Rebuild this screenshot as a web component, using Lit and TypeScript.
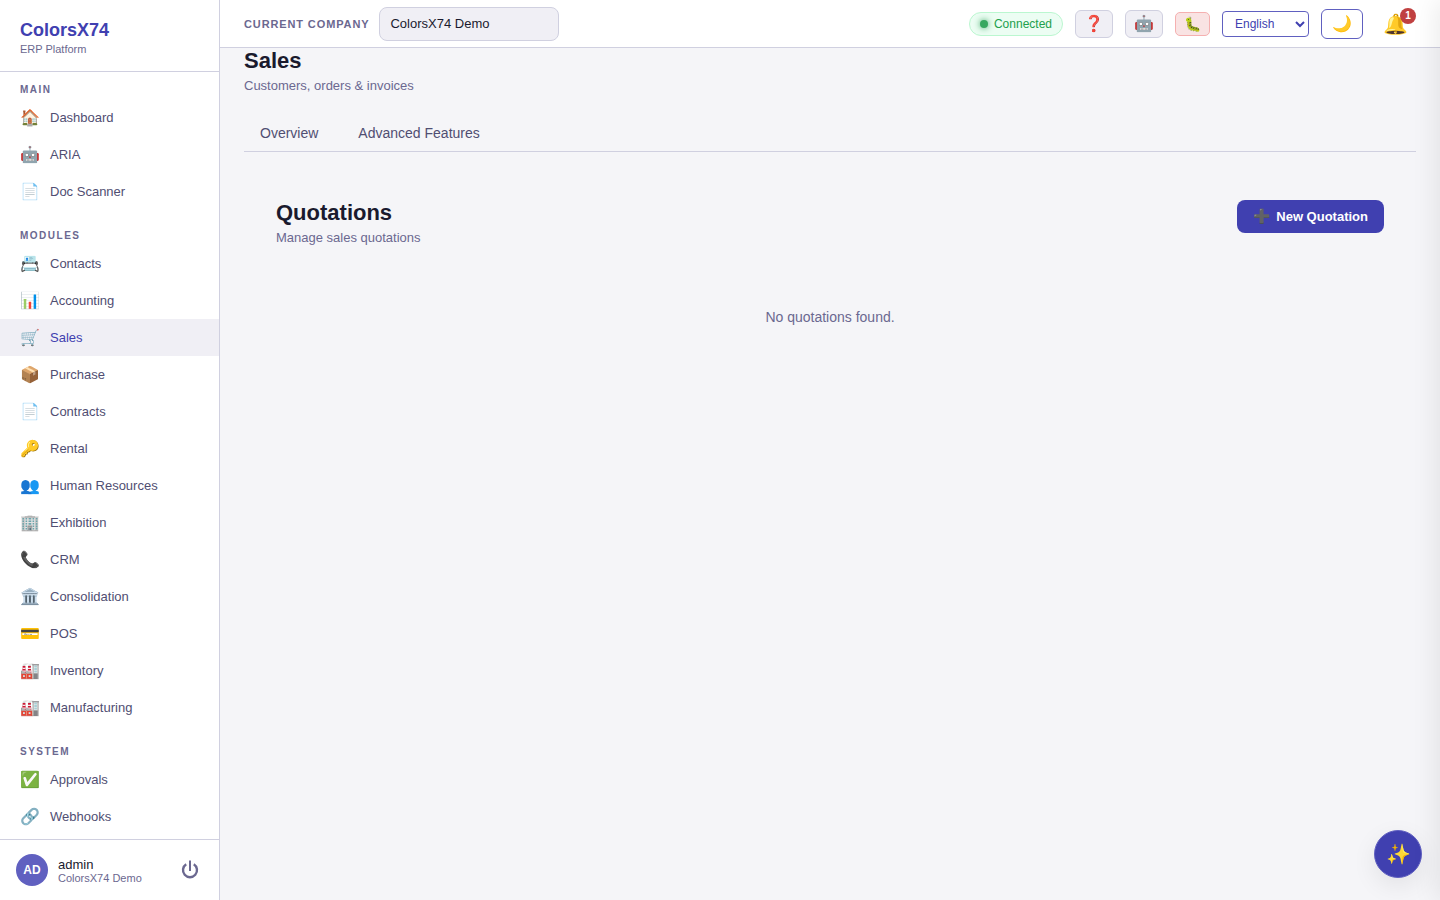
import { LitElement, html, css } from "lit";
import { customElement, state } from "lit/decorators.js";
import { classMap } from "lit/directives/class-map.js";

interface NavItem {
  icon: string;
  label: string;
}

interface NavSection {
  title: string;
  items: NavItem[];
}

const sections: NavSection[] = [
  {
    title: "Main",
    items: [
      { icon: "🏠", label: "Dashboard" },
      { icon: "🤖", label: "ARIA" },
      { icon: "📄", label: "Doc Scanner" },
    ],
  },
  {
    title: "Modules",
    items: [
      { icon: "📇", label: "Contacts" },
      { icon: "📊", label: "Accounting" },
      { icon: "🛒", label: "Sales" },
      { icon: "📦", label: "Purchase" },
      { icon: "📄", label: "Contracts" },
      { icon: "🔑", label: "Rental" },
      { icon: "👥", label: "Human Resources" },
      { icon: "🏢", label: "Exhibition" },
      { icon: "📞", label: "CRM" },
      { icon: "🏛️", label: "Consolidation" },
      { icon: "💳", label: "POS" },
      { icon: "🏭", label: "Inventory" },
      { icon: "🏭", label: "Manufacturing" },
    ],
  },
  {
    title: "System",
    items: [
      { icon: "✅", label: "Approvals" },
      { icon: "🔗", label: "Webhooks" },
    ],
  },
];

@customElement("app-sidebar")
export class AppSidebar extends LitElement {
  @state() private active = "Sales";

  static styles = css`
    :host {
      display: flex;
      flex-direction: column;
      box-sizing: border-box;
      width: 220px;
      flex: none;
      min-height: 0;
      background: #fff;
      border-right: 1px solid #d0d0e0;
    }
    .brand {
      padding: 20px 20px 15px;
      border-bottom: 1px solid #d0d0e0;
    }
    .brand-name {
      font-size: 18px;
      line-height: 20px;
      font-weight: 700;
      color: #4040b0;
    }
    .brand-sub {
      margin-top: 3px;
      font-size: 11px;
      line-height: 13px;
      color: #6b6890;
    }
    .nav {
      flex: 1;
      min-height: 0;
      overflow: hidden auto;
      scrollbar-width: none;
      padding-top: 12px;
    }
    .section {
      margin-bottom: 20px;
    }
    .section:last-child {
      margin-bottom: 0;
    }
    .section-title {
      margin: 0;
      padding: 0 20px 4px;
      font-size: 10px;
      line-height: 11px;
      font-weight: 700;
      letter-spacing: 0.15em;
      text-transform: uppercase;
      color: #6b6890;
    }
    .item {
      display: flex;
      align-items: center;
      gap: 10px;
      padding: 9px 20px;
      font-size: 13px;
      line-height: 15px;
      color: #504e72;
      text-decoration: none;
    }
    .item.active {
      background: #f0eff5;
      color: #4040b0;
    }
    .icon {
      width: 20px;
      font-size: 16px;
      line-height: 19px;
      text-align: center;
    }
    .user {
      display: flex;
      align-items: center;
      gap: 10px;
      padding: 14px 16px;
      border-top: 1px solid #d0d0e0;
    }
    .avatar {
      display: grid;
      place-items: center;
      width: 32px;
      height: 32px;
      border-radius: 50%;
      background: #6060c0;
      color: #fff;
      font-size: 12px;
      font-weight: 700;
    }
    .who {
      flex: 1;
    }
    .user-name {
      font-size: 13px;
      line-height: 15px;
      color: #1a1a2e;
    }
    .user-company {
      font-size: 11px;
      line-height: 12px;
      color: #6b6890;
    }
    .power {
      display: block;
      border: 0;
      padding: 4px;
      background: none;
      color: #6b6890;
    }
    .power svg {
      display: block;
      width: 18px;
      height: 20px;
    }
  `;

  private select(event: Event, label: string) {
    event.preventDefault();
    this.active = label;
  }

  render() {
    return html`
      <div class="brand">
        <div class="brand-name">ColorsX74</div>
        <div class="brand-sub">ERP Platform</div>
      </div>
      <nav class="nav">
        ${sections.map(
          (section) => html`
            <div class="section">
              <h2 class="section-title">${section.title}</h2>
              ${section.items.map(
                (item) => html`<a
                  href="#"
                  class=${classMap({ item: true, active: item.label === this.active })}
                  @click=${(e: Event) => this.select(e, item.label)}
                  ><span class="icon">${item.icon}</span><span>${item.label}</span></a
                >`
              )}
            </div>
          `
        )}
      </nav>
      <div class="user">
        <div class="avatar">AD</div>
        <div class="who">
          <div class="user-name">admin</div>
          <div class="user-company">ColorsX74 Demo</div>
        </div>
        <button class="power" aria-label="Log out">
          <svg viewBox="0 0 18 20" fill="none" stroke="currentColor" stroke-width="2.4">
            <path d="M9 0.5v10.5" stroke-width="2" />
            <path d="M5.2 4.3a7 7 0 1 0 7.6 0" />
          </svg>
        </button>
      </div>
    `;
  }
}

@customElement("app-topbar")
export class AppTopbar extends LitElement {
  static styles = css`
    :host {
      display: flex;
      align-items: center;
      justify-content: space-between;
      box-sizing: border-box;
      height: 48px;
      flex: none;
      padding: 0 24px;
      background: #fff;
      border-bottom: 1px solid #d0d0e0;
    }
    button,
    input,
    select {
      box-sizing: border-box;
      font-family: "Liberation Sans", Arial, sans-serif;
    }
    .company,
    .tools {
      display: flex;
      align-items: center;
    }
    .company {
      gap: 10px;
    }
    .company-label {
      font-size: 11px;
      font-weight: 700;
      letter-spacing: 0.08em;
      text-transform: uppercase;
      color: #6b6890;
    }
    .company-input {
      width: 180px;
      height: 34px;
      padding: 0 10px;
      border: 1px solid #d0d0e0;
      border-radius: 8px;
      background: #f0eff5;
      color: #1a1a2e;
      font-size: 13px;
    }
    .tools {
      gap: 12px;
    }
    .status {
      display: flex;
      align-items: center;
      gap: 6px;
      padding: 4px 10px;
      border: 1px solid #bbf7d0;
      border-radius: 12px;
      background: #ecfdf3;
      color: #22a04c;
      font-size: 12px;
      line-height: 14px;
    }
    .dot {
      width: 8px;
      height: 8px;
      border-radius: 50%;
      background: #38a860;
      box-shadow: 0 0 6px #38a860;
    }
    .tool {
      padding: 4px 8px;
      border: 1px solid #d0d0e0;
      border-radius: 6px;
      background: #f0eff5;
      font-size: 16px;
      line-height: 18px;
    }
    .bug {
      border-color: #f5b0b0;
      border-radius: 5px;
      background: #f9e3e3;
      font-size: 14px;
      line-height: 14px;
    }
    .language {
      height: 26px;
      width: 87px;
      padding: 4px 8px;
      border: 1px solid #6060c0;
      border-radius: 4px;
      background: #fff;
      color: #4040b0;
      font-size: 12px;
    }
    .theme {
      padding: 5px 10px;
      border-color: #6060c0;
      background: #fff;
    }
    .bell {
      position: relative;
      border: 0;
      padding: 4px 8px;
      background: none;
      font-size: 20px;
      line-height: 24px;
    }
    .badge {
      position: absolute;
      top: 0;
      right: 0;
      width: 16px;
      height: 16px;
      border-radius: 50%;
      background: #c04040;
      color: #fff;
      font-size: 10px;
      line-height: 16px;
      font-weight: 700;
      text-align: center;
    }
  `;

  render() {
    return html`
      <div class="company">
        <label class="company-label" for="company">Current company</label>
        <input class="company-input" id="company" type="text" value="ColorsX74 Demo" />
      </div>
      <div class="tools">
        <div class="status"><span class="dot"></span>Connected</div>
        <button class="tool" aria-label="Help">❓</button>
        <button class="tool" aria-label="Assistant">🤖</button>
        <button class="tool bug" aria-label="Report a bug">🐛</button>
        <select class="language" aria-label="Language">
          <option>English</option>
        </select>
        <button class="tool theme" aria-label="Dark mode">🌙</button>
        <button class="bell" aria-label="Notifications">🔔<span class="badge">1</span></button>
      </div>
    `;
  }
}

@customElement("app-root")
export class AppRoot extends LitElement {
  static styles = css`
    :host {
      display: flex;
      height: 100vh;
      overflow: hidden;
      background: #f5f5f8;
      color: #1a1a2e;
      font-family: "Liberation Sans", Arial, sans-serif;
    }
    .main {
      display: flex;
      flex-direction: column;
      flex: 1;
      min-width: 0;
    }
    .content {
      flex: 1;
      min-height: 0;
      overflow: auto;
      padding: 0 24px;
    }
    .title {
      margin: 0;
      font-size: 22px;
      line-height: 25px;
      font-weight: 700;
    }
    .subtitle {
      margin: 5px 0 0;
      font-size: 13px;
      line-height: 15px;
      color: #6b6890;
    }
    .tabs {
      display: flex;
      gap: 8px;
      margin-top: 22px;
      border-bottom: 1px solid #d0d0e0;
    }
    .tab {
      border: 0;
      padding: 10px 16px;
      background: none;
      color: #504e72;
      font: 14px/16px "Liberation Sans", Arial, sans-serif;
    }
    .panel {
      padding: 48px 32px;
    }
    .panel-head {
      display: flex;
      justify-content: space-between;
      align-items: flex-start;
    }
    .primary {
      display: flex;
      align-items: center;
      gap: 6px;
      padding: 9px 16px;
      border: 0;
      border-radius: 8px;
      background: #4040b0;
      color: #fff;
      font: 700 13px/15px "Liberation Sans", Arial, sans-serif;
    }
    .plus {
      font-size: 14px;
    }
    .empty {
      margin: 0;
      padding: 64px 0;
      font-size: 14px;
      line-height: 16px;
      text-align: center;
      color: #6b6890;
    }
    .fab {
      position: fixed;
      right: 18px;
      bottom: 22px;
      width: 48px;
      height: 48px;
      padding: 0;
      border: 1px solid #6060c0;
      border-radius: 50%;
      background: #4040b0;
      box-shadow: 0 8px 24px rgba(0, 0, 0, 0.08);
      font: 20px/23px "Liberation Sans", Arial, sans-serif;
    }
    .drawer {
      position: fixed;
      top: 0;
      bottom: 0;
      left: 100%;
      width: 400px;
      background: #fff;
      box-shadow: -4px 0 24px rgba(0, 0, 0, 0.08);
    }
  `;

  render() {
    return html`
      <app-sidebar></app-sidebar>
      <div class="main">
        <app-topbar></app-topbar>
        <main class="content">
          <h1 class="title">Sales</h1>
          <p class="subtitle">Customers, orders &amp; invoices</p>
          <div class="tabs">
            <button class="tab">Overview</button>
            <button class="tab">Advanced Features</button>
          </div>
          <section class="panel">
            <div class="panel-head">
              <div>
                <h2 class="title">Quotations</h2>
                <p class="subtitle">Manage sales quotations</p>
              </div>
              <button class="primary"><span class="plus">➕</span>New Quotation</button>
            </div>
            <p class="empty">No quotations found.</p>
          </section>
        </main>
      </div>
      <button class="fab" aria-label="Quick actions">✨</button>
      <aside class="drawer"></aside>
    `;
  }
}
